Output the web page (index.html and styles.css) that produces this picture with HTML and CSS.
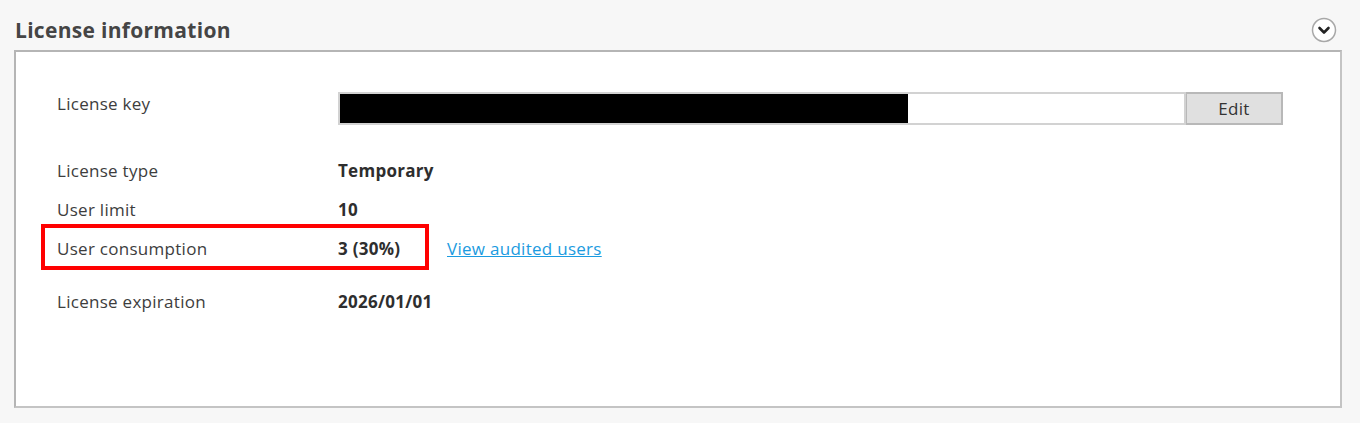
FILE: index.html
```html
<!DOCTYPE html>
<html lang="en">
<head>
    <meta charset="UTF-8">
    <title>License information</title>
    <link rel="stylesheet" href="styles.css">
</head>
<body>
    <div class="section">
        <div class="section-head">
            <h2>License information</h2>
            <button class="collapse-btn" title="Collapse">
                <svg width="26" height="26" viewBox="0 0 26 26">
                    <circle cx="13" cy="13" r="11.5" fill="#fff" stroke="#a8a8a8" stroke-width="1.5"/>
                    <path d="M8.5 11 L13 15.5 L17.5 11" fill="none" stroke="#222" stroke-width="2.6" stroke-linecap="round" stroke-linejoin="round"/>
                </svg>
            </button>
        </div>

        <div class="panel">
            <div class="row key-row">
                <span class="label">License key</span>
                <div class="key-field">
                    <div class="key-input"><span class="redacted"></span></div>
                    <button class="edit-btn">Edit</button>
                </div>
            </div>
            <div class="row first">
                <span class="label">License type</span>
                <span class="value">Temporary</span>
            </div>
            <div class="row">
                <span class="label">User limit</span>
                <span class="value">10</span>
            </div>
            <div class="row marked">
                <span class="mark"></span>
                <span class="label">User consumption</span>
                <span class="value">3 (30%)</span>
                <a href="#" class="link">View audited users</a>
            </div>
            <div class="row last">
                <span class="label">License expiration</span>
                <span class="value">2026/01/01</span>
            </div>
        </div>
    </div>
</body>
</html>
```

FILE: styles.css
```css
body {
    margin: 0;
    padding: 0;
    font-family: "Open Sans", "Noto Sans", sans-serif;
    background-color: #f7f7f7;
    color: #3d3d3d;
}
.section {
    padding: 0 18px 0 14px;
}
.section-head {
    display: flex;
    justify-content: space-between;
    align-items: center;
    height: 40px;
    padding: 10px 5px 0 1px;
}
.section-head h2 {
    margin: 0;
    font-size: 21px;
    font-weight: bold;
    color: #454545;
    letter-spacing: 0.3px;
}
.collapse-btn {
    background: none;
    border: none;
    padding: 0;
    width: 26px;
    height: 26px;
    cursor: pointer;
}
.collapse-btn svg {
    display: block;
}
.panel {
    background: white;
    border: 2px solid #b5b5b5;
    border-right-color: #c4c4c4;
    border-bottom-color: #c4c4c4;
    height: 358px;
    box-sizing: border-box;
    padding: 40px 57px 0 41px;
}
.row {
    display: flex;
    align-items: center;
    height: 39px;
    font-size: 17px;
    letter-spacing: 0.28px;
}
.label {
    width: 281px;
    flex-shrink: 0;
    color: #3d3d3d;
}
.value {
    width: 109px;
    font-weight: bold;
    color: #2e2e2e;
}
.key-row {
    align-items: flex-start;
    height: 33px;
}
.key-row .label {
    line-height: 24px;
}
.row.first {
    margin-top: 26px;
}
.row.last {
    margin-top: 14px;
}
.key-field {
    display: flex;
    flex: 1;
    height: 33px;
}
.key-input {
    flex: 1;
    border: 2px solid #d2d2d2;
    background: white;
    display: flex;
}
.redacted {
    width: 568px;
    background: #000;
}
.edit-btn {
    width: 97px;
    height: 33px;
    border: 2px solid #b8b8b8;
    border-left-width: 1px;
    background: #e0e0e0;
    font-family: inherit;
    font-size: 17px;
    letter-spacing: 0.28px;
    color: #333;
    cursor: pointer;
}
.marked {
    position: relative;
}
.mark {
    position: absolute;
    left: -16px;
    top: -5px;
    width: 380px;
    height: 38px;
    border: 4px solid #f00;
}
.link {
    color: #1b9be0;
    text-decoration: underline;
}
```
